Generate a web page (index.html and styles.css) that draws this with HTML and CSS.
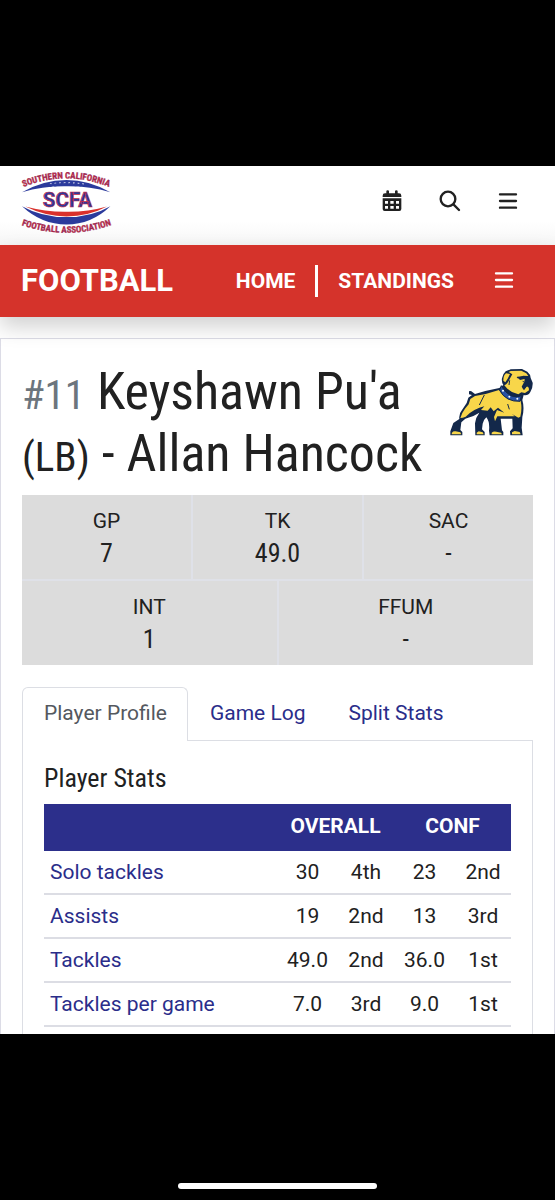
FILE: index.html
```html
<!DOCTYPE html>
<html lang="en">
<head>
<meta charset="utf-8">
<meta name="viewport" content="width=device-width, initial-scale=1">
<title>Keyshawn Pu'a - Allan Hancock</title>
<link rel="stylesheet" href="styles.css">
</head>
<body>
<div class="screen">
  <header class="topbar">
    <a class="brand" href="#" aria-label="Southern California Football Association">
      <svg class="brand-logo" viewBox="30 25 280 200" aria-hidden="true">
        <defs>
          <path id="arc-top" d="M34 81 Q170 24 304 81"/>
          <path id="arc-bottom" d="M31 192 Q170 240 309 192"/>
        </defs>
        <path fill="#2b3a9c" d="M36 94 Q100 57 170 57 Q238 57 302 94 Q238 75 170 76 Q100 75 36 94Z"/>
        <path stroke="#fff" stroke-width="3" stroke-dasharray="5 9" fill="none" d="M120 69 Q170 62 222 69"/>
        <path stroke="#2b3a9c" stroke-width="8" stroke-dasharray="7 8" fill="none" d="M118 74 Q170 68 224 74"/>
        <path fill="#2b3a9c" d="M36 136 Q95 169 170 169 Q245 169 302 136 Q245 191 170 191 Q95 191 36 136Z"/>
        <path fill="#d9302c" d="M46 137 Q110 154 170 153 Q232 154 292 137 Q235 167 170 167 Q108 167 46 137Z"/>
        <text class="logo-name" x="173" y="138" text-anchor="middle">SCFA</text>
        <text class="logo-ring"><textPath href="#arc-top" startOffset="50%" text-anchor="middle">SOUTHERN CALIFORNIA</textPath></text>
        <text class="logo-ring"><textPath href="#arc-bottom" startOffset="50%" text-anchor="middle">FOOTBALL ASSOCIATION</textPath></text>
      </svg>
    </a>
    <div class="tools">
      <button class="icon-button" type="button" aria-label="Calendar">
        <svg class="icon" viewBox="0 0 60 66" aria-hidden="true"><path fill="currentColor" fill-rule="evenodd" d="M13 10V4q0-3 4-3t4 3v6h18V4q0-3 4-3t4 3v6h4q7 0 7 7v4H2v-4q0-7 7-7ZM2 25h56v32q0 6-6 6H8q-6 0-6-6ZM9 33v8h9v-8ZM25 33v8h10v-8ZM42 33v8h9v-8ZM9 48v8h9v-8ZM25 48v8h10v-8ZM42 48v8h9v-8Z"/></svg>
      </button>
      <button class="icon-button" type="button" aria-label="Search">
        <svg class="icon" viewBox="0 0 66 66" aria-hidden="true"><g fill="none" stroke="currentColor" stroke-width="7" stroke-linecap="round"><circle cx="27" cy="27" r="22"/><path d="M44 44 60 60"/></g></svg>
      </button>
      <button class="icon-button" type="button" aria-label="Menu">
        <svg class="icon" viewBox="0 0 60 66" aria-hidden="true"><path fill="none" stroke="currentColor" stroke-width="7" stroke-linecap="round" d="M6 13H54M6 33H54M6 53H54"/></svg>
      </button>
    </div>
  </header>

  <nav class="sportbar" aria-label="Football">
    <a class="sport" href="#">FOOTBALL</a>
    <div class="sport-links">
      <a class="sport-link" href="#">HOME</a>
      <a class="sport-link" href="#">STANDINGS</a>
    </div>
    <button class="icon-button" type="button" aria-label="Football menu">
      <svg class="icon" viewBox="0 0 60 66" aria-hidden="true"><path fill="none" stroke="currentColor" stroke-width="7" stroke-linecap="round" d="M6 10H54M6 30H54M6 50H54"/></svg>
    </button>
  </nav>

  <main class="card">
    <div class="player-head">
      <h1 class="player"><span class="number">#11</span> Keyshawn Pu'a <span class="position">(LB)</span> - Allan Hancock</h1>
      <svg class="mascot" viewBox="27 38 252 204" role="img" aria-label="Allan Hancock Bulldogs">
        <path fill="#13284a" d="M87 108Q92 105 98 111L105 116Q140 105 178 98L190 89Q184 79 186 69Q188 56 197 48L212 42L246 41L262 49Q271 56 272 68L278 82Q279 98 271 110Q264 122 251 119L247 134Q254 158 247 185L245 217L248 240H211L210 228L218 219L217 190H182L186 225L190 230V240H149L147 226Q150 200 139 186Q130 194 128 205L126 222L134 230V240H106L105 204Q107 186 118 172Q99 185 76 190L64 201L61 224L67 230V240H31V228L40 203L58 191Q56 175 66 164L80 143L85 127L96 119L87 117Z"/>
        <path fill="#f8d64a" d="M105 122Q143 116 177 104Q184 118 205 130Q224 138 242 137Q247 160 241 184L235 187L216 176L224 183H172L165 198L162 185L171 164L193 172L174 157L161 168L152 156L143 166L123 164L133 153Q102 160 77 184Q68 188 61 188Q65 173 75 160L86 147L91 131Z"/>
        <path fill="#f8d64a" d="M193 90Q203 86 209 71L217 57L206 50L212 47L244 46L259 54L265 62L250 61L237 66L229 65L240 71L254 71L253 81L245 94L252 102L261 93L266 95L267 105L255 113L244 111L235 117L216 110L202 100ZM190 76Q190 60 198 54L210 56L203 70L196 81Z"/>
        <path fill="#2952a3" stroke="#13284a" stroke-width="3" d="M184 91Q196 113 215 122Q230 128 244 121L240 138Q220 139 204 131Q187 122 179 104Z"/>
        <g fill="#fff"><circle cx="189" cy="106" r="3"/><circle cx="208" cy="124" r="3"/><circle cx="232" cy="130" r="3"/></g>
        <g fill="#f8d64a"><path d="M36 232Q39 227 47 228L61 231L64 237H35Z"/><path d="M110 232L116 228L128 231L131 237H110Z"/><path d="M155 232Q160 227 169 229L183 232L186 237H155Z"/><path d="M216 231L224 227L239 230L242 237H216Z"/></g>
        <path stroke="#13284a" stroke-width="3" fill="none" d="M118 149 133 119M203 146 208 162M209 75 207 89M231 67 265 68M248 78 264 86"/>
        <path fill="#13284a" d="M231 64 250 63 267 67 266 73 253 71 240 74ZM249 85 261 82 269 89 268 99 261 92 252 105 247 98Z"/>
      </svg>
    </div>

    <dl class="totals">
      <div class="total third"><dt>GP</dt><dd>7</dd></div>
      <div class="total third"><dt>TK</dt><dd>49.0</dd></div>
      <div class="total third"><dt>SAC</dt><dd>-</dd></div>
      <div class="total half"><dt>INT</dt><dd>1</dd></div>
      <div class="total half"><dt>FFUM</dt><dd>-</dd></div>
    </dl>

    <div class="tabs" role="tablist">
      <button class="tab active" type="button" role="tab" aria-selected="true">Player Profile</button>
      <button class="tab" type="button" role="tab" aria-selected="false">Game Log</button>
      <button class="tab" type="button" role="tab" aria-selected="false">Split Stats</button>
    </div>

    <section class="panel" role="tabpanel">
      <h2 class="panel-title">Player Stats</h2>
      <table class="stats">
        <colgroup><col><col class="value"><col class="rank"><col class="value"><col class="rank"></colgroup>
        <thead>
          <tr><td></td><th colspan="2" scope="colgroup">OVERALL</th><th colspan="2" scope="colgroup">CONF</th></tr>
        </thead>
        <tbody>
          <tr><th scope="row"><a href="#">Solo tackles</a></th><td>30</td><td>4th</td><td>23</td><td>2nd</td></tr>
          <tr><th scope="row"><a href="#">Assists</a></th><td>19</td><td>2nd</td><td>13</td><td>3rd</td></tr>
          <tr><th scope="row"><a href="#">Tackles</a></th><td>49.0</td><td>2nd</td><td>36.0</td><td>1st</td></tr>
          <tr><th scope="row"><a href="#">Tackles per game</a></th><td>7.0</td><td>3rd</td><td>9.0</td><td>1st</td></tr>
        </tbody>
      </table>
    </section>
  </main>
</div>
<div class="home-indicator"></div>
</body>
</html>
```
FILE: styles.css
```css
* {
  box-sizing: border-box;
}

body {
  margin: 0;
  height: 100vh;
  display: grid;
  grid-template-rows: 1fr 166px;
  padding-top: 166px;
  background: #000;
  color: #212121;
  font-family: Roboto, "Liberation Sans", sans-serif;
  font-size: 21px;
  line-height: 32px;
}

a {
  color: #2a2d8a;
  text-decoration: none;
}

button {
  border: 0;
  padding: 0;
  background: none;
  color: inherit;
  font: inherit;
}

.screen {
  min-height: 0;
  overflow: hidden;
  display: flex;
  flex-direction: column;
  background: #fff;
}

.topbar {
  flex: none;
  display: flex;
  align-items: center;
  justify-content: space-between;
  height: 79px;
  padding: 0 37px 10px 20px;
  background: linear-gradient(#fff 70%, #f6f6f6);
}

.brand,
.icon,
.mascot {
  display: block;
}

.brand {
  padding-top: 4px;
}

.brand-logo {
  display: block;
  width: 93px;
  height: 67px;
  overflow: visible;
}

.logo-name {
  fill: #2b3a9c;
  stroke: #c22a4a;
  stroke-width: 2px;
  font: 700 62px Roboto, sans-serif;
}

.logo-ring {
  fill: #c4283c;
  stroke: #8a2a5e;
  stroke-width: 1px;
  font: 700 27px "Roboto Condensed", Roboto, sans-serif;
}

.tools {
  display: flex;
  gap: 37px;
}

.icon {
  height: 22px;
}

.sportbar {
  position: relative;
  flex: none;
  display: flex;
  align-items: center;
  height: 72px;
  padding: 0 41px 0 21px;
  background: #d5332b;
  color: #fff;
  font-weight: 700;
  box-shadow: 0 10px 20px rgba(0, 0, 0, .18);
}

.sport,
.sport-link {
  color: #fff;
}

.sport {
  font-size: 31px;
}

.sport-links {
  display: flex;
  margin-left: auto;
  margin-right: 40px;
}

.sport-link + .sport-link {
  margin-left: 20px;
  padding-left: 20px;
  border-left: 3px solid #fff;
}

.card {
  flex: 1 0 auto;
  margin-top: 21px;
  padding: 22px 21px;
  border: 1px solid #dcdce6;
  border-bottom: 0;
}

.player-head {
  display: flex;
  justify-content: space-between;
  align-items: flex-start;
  margin-bottom: 10px;
}

.player {
  flex: 1;
  margin: 0;
  font: 400 52px/62px "Roboto Condensed", Roboto, sans-serif;
}

.number,
.position {
  font-size: 41px;
  line-height: 1;
}

.number {
  color: #6c757d;
}

.mascot {
  flex: none;
  width: 84px;
  height: 68px;
  margin-top: 7px;
}

.totals {
  display: grid;
  grid-template-columns: repeat(6, 1fr);
  gap: 2px;
  margin: 0 0 22px;
  background: #dfe1e8;
}

.total {
  padding: 10px 0;
  background: #dcdcdc;
  text-align: center;
}

.third {
  grid-column: span 2;
}

.half {
  grid-column: span 3;
}

.total dd {
  margin: 0;
  font: 400 26px/32px "Roboto Condensed", Roboto, sans-serif;
}

.tabs {
  position: relative;
  display: flex;
  margin-bottom: -1px;
}

.tab {
  height: 54px;
  padding: 0 20px 3px 21px;
  border: 1px solid transparent;
  border-bottom: 0;
  color: #2a2d8a;
}

.tab.active {
  border-color: #dcdee4;
  border-radius: 6px 6px 0 0;
  background: #fff;
  color: #54585e;
}

.panel {
  padding: 21px;
  border: 1px solid #dcdee4;
  border-bottom: 0;
}

.panel-title {
  margin: 0 0 10px;
  font: 400 26px/32px "Roboto Condensed", Roboto, sans-serif;
}

.stats {
  width: 100%;
  border-collapse: separate;
  border-spacing: 0;
  table-layout: fixed;
}

.value {
  width: 61px;
}

.rank {
  width: 56px;
}

.stats th,
.stats td {
  height: 44px;
  padding: 0;
  border-bottom: 2px solid #dcdde4;
  text-align: center;
}

.stats thead th,
.stats thead td {
  height: 47px;
  padding-bottom: 3px;
  border-bottom: 1px solid #2c2f8b;
  background: #2c2f8b;
  color: #fff;
  font-weight: 700;
}

.stats tbody th {
  padding-left: 6px;
  text-align: left;
  font-weight: 400;
}

.home-indicator {
  align-self: end;
  justify-self: center;
  width: 36%;
  height: 6px;
  margin-bottom: 11px;
  border-radius: 3px;
  background: #fff;
}
```
